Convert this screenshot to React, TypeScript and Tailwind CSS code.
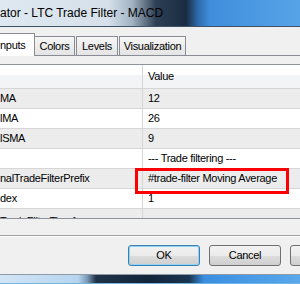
const rows = [
  { name: 'MA', value: '12' },
  { name: 'lMA', value: '26' },
  { name: 'lSMA', value: '9' },
  { name: '', value: '--- Trade filtering ---' },
  { name: 'nalTradeFilterPrefix', value: '#trade-filter Moving Average', marked: true },
  { name: 'dex', value: '1' },
  { name: 'TradeFilterTimeframe', value: '', clipped: true },
];

function TitleBar() {
  return (
    <div className="h-[27px] shrink-0 flex items-center border-b border-[#3d5266] bg-[linear-gradient(to_right,#dfe8f0_0%,#d5e0ea_36%,#a3b3c3_44%,#2d3f54_52%,#1a2c40_62%,#2c6bab_66%,#3f8ddc_70%,#58a4e8_100%)]">
      <span className="text-[12px] tracking-normal text-black whitespace-nowrap">ator - LTC Trade Filter - MACD</span>
    </div>
  );
}

function Tabs() {
  const inactive =
    'h-[19px] flex items-center justify-center border border-b-0 border-[#898c95] bg-[linear-gradient(#f6f6f6,#e4e4e4)] whitespace-nowrap';
  return (
    <div className="h-[29px] shrink-0 flex items-end border-b border-[#898c95]">
      <div className="relative z-10 -mb-px h-[23px] w-[35px] flex items-center bg-white border-t border-r border-[#898c95] whitespace-nowrap">
        nputs
      </div>
      <div className={`${inactive} w-[40px] border-l-0`}>Colors</div>
      <div className={`${inactive} w-[42px] ml-[1px]`}>Levels</div>
      <div className={`${inactive} w-[67px] ml-[1px]`}>Visualization</div>
    </div>
  );
}

function PropertyTable() {
  return (
    <div className="h-[155px] shrink-0 overflow-hidden border-t border-b border-[#8e939c] bg-white">
      {/* header */}
      <div className="h-[24px] flex border-b border-[#d5d5d5] bg-[linear-gradient(#ffffff_0%,#ffffff_45%,#f3f4f6_45%,#f3f4f6_100%)]">
        <div className="w-[143px] border-r border-[#d5d5d5]" />
        <div className="flex-1 pl-[5px] flex items-center">Value</div>
      </div>
      {rows.map((row, i) => (
        <div
          key={i}
          className={`h-[20px] flex border-b border-[#d6d6d6] ${i % 2 === 0 ? 'bg-[#ececec]' : 'bg-white'}`}
        >
          <div
            className={`w-[143px] border-r border-[#d6d6d6] flex whitespace-nowrap overflow-hidden ${
              row.clipped ? 'items-start pt-[4px]' : 'items-center'
            }`}
          >
            {row.name}
          </div>
          <div className="relative flex-1 pl-[5px] flex items-center whitespace-nowrap">
            {row.value}
            {row.marked && (
              <div className="absolute z-10 -left-[8px] -top-[1px] w-[154px] h-[26px] border-[3px] border-[#ff0000]" />
            )}
          </div>
        </div>
      ))}
    </div>
  );
}

function Button({ label, focused }: { label: string; focused?: boolean }) {
  return (
    <div
      className={`w-[72px] h-[21px] shrink-0 flex items-center justify-center rounded-[3px] border bg-[linear-gradient(#f2f2f2_0%,#ebebeb_50%,#dddddd_50%,#cfcfcf_100%)] ${
        focused ? 'border-[#3c7fb1] shadow-[inset_0_0_0_1px_#8fd3f7]' : 'border-[#707070]'
      }`}
    >
      {label}
    </div>
  );
}

export default function App() {
  return (
    <div className="w-[300px] h-[284px] overflow-hidden flex flex-col bg-[#f0f0f0] font-['Liberation_Sans',Arial,sans-serif] text-[11px] tracking-[-0.3px] text-black">
      <TitleBar />
      <Tabs />
      <div className="h-[8px] shrink-0" />
      <PropertyTable />
      <div className="h-[17px] shrink-0 border-b border-[#a0a0a0]" />
      <div className="h-px shrink-0 bg-white" />
      <div className="h-[37px] shrink-0 flex gap-[9px] pl-[128px] pt-[8px] overflow-hidden">
        <Button label="OK" focused />
        <Button label="Cancel" />
        <Button label="" />
      </div>
      <div className="h-px shrink-0 bg-[#8e9aa6]" />
      <div className="flex-1 border-b border-[#6fb6e6] bg-[linear-gradient(to_right,#d2e5f6_0%,#b7d4ef_26%,#7d9bb8_29%,#203246_32%,#14253a_50%,#1b3451_63%,#3a8fe0_68%,#5aa8ec_100%)]" />
    </div>
  );
}
